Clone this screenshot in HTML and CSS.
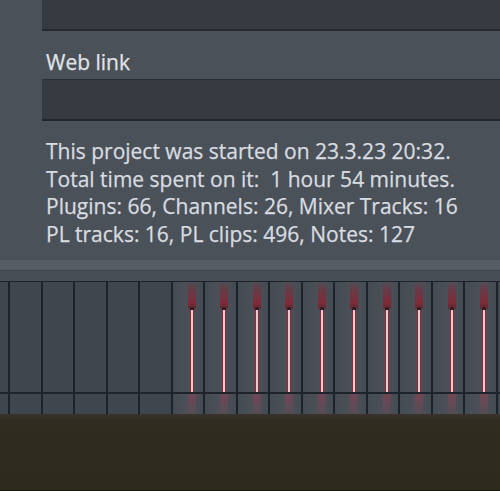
FILE: index.html
```html
<!DOCTYPE html>
<html>
<head>
<meta charset="utf-8">
<link rel="stylesheet" href="styles.css">
</head>
<body>
<div class="panel">
  <div class="field field-top"></div>
  <div class="label">Web link</div>
  <div class="field field-link"></div>
  <div class="info">
    <div>This project was started on 23.3.23 20:32.</div>
    <div>Total time spent on it:&nbsp; 1 hour 54 minutes.</div>
    <div>Plugins: 66, Channels: 26, Mixer Tracks: 16</div>
    <div>PL tracks: 16, PL clips: 496, Notes: 127</div>
  </div>
</div>
<div class="edge"></div>
<div class="band"></div>
<div class="grid">
  <div class="cell cell-first"><div class="upper"></div><div class="lower"></div></div>
  <div class="cell"><div class="upper"></div><div class="lower"></div></div>
  <div class="cell"><div class="upper"></div><div class="lower"></div></div>
  <div class="cell"><div class="upper"></div><div class="lower"></div></div>
  <div class="cell"><div class="upper"></div><div class="lower"></div></div>
  <div class="cell"><div class="upper"></div><div class="lower"></div></div>
  <div class="cell lit"><div class="upper"><div class="note"></div></div><div class="lower"><div class="glow"></div></div></div>
  <div class="cell lit"><div class="upper"><div class="note"></div></div><div class="lower"><div class="glow"></div></div></div>
  <div class="cell lit"><div class="upper"><div class="note"></div></div><div class="lower"><div class="glow"></div></div></div>
  <div class="cell lit"><div class="upper"><div class="note"></div></div><div class="lower"><div class="glow"></div></div></div>
  <div class="cell lit"><div class="upper"><div class="note"></div></div><div class="lower"><div class="glow"></div></div></div>
  <div class="cell lit"><div class="upper"><div class="note"></div></div><div class="lower"><div class="glow"></div></div></div>
  <div class="cell lit"><div class="upper"><div class="note"></div></div><div class="lower"><div class="glow"></div></div></div>
  <div class="cell lit"><div class="upper"><div class="note"></div></div><div class="lower"><div class="glow"></div></div></div>
  <div class="cell lit"><div class="upper"><div class="note"></div></div><div class="lower"><div class="glow"></div></div></div>
  <div class="cell lit"><div class="upper"><div class="note"></div></div><div class="lower"><div class="glow"></div></div></div>
  <div class="cell"><div class="upper"></div><div class="lower"></div></div>
</div>
<div class="floor"></div>
</body>
</html>
```
FILE: styles.css
```css
html, body {
  margin: 0;
  padding: 0;
  background: #ffffff;
  width: 500px;
  height: 500px;
  overflow: hidden;
}
.panel {
  background: #4b5158;
  height: 260px;
  padding-left: 42px;
  box-sizing: border-box;
  font-family: "Open Sans", "Noto Sans", sans-serif;
  color: #d8dce0;
}
.field {
  background: #353b41;
}
.field-top {
  height: 29px;
  border-bottom: 2px solid #262a2f;
}
.label {
  font-size: 21px;
  line-height: 27px;
  padding-left: 4px;
  margin-top: 18px;
  height: 30px;
  color: #e0e4e8;
  -webkit-text-stroke: 0.25px #e0e4e8;
}
.field-link {
  height: 39px;
  border-top: 1px solid #2a2f34;
  border-bottom: 2px solid #23272c;
}
.info {
  margin-top: 17px;
  padding-left: 4px;
  font-size: 21px;
  line-height: 27.7px;
  white-space: nowrap;
  -webkit-text-stroke: 0.25px #d8dce0;
}
.edge {
  height: 10px;
  background: #555c64;
  border-bottom: 1px solid #3f454c;
}
.band {
  height: 10px;
  background: #484e56;
  border-bottom: 1px solid #1f242a;
}
.grid {
  display: grid;
  grid-template-columns: 8px repeat(15, 32.5px) 4.5px;
  width: 500px;
  height: 132px;
  overflow: hidden;
  background: #40464e;
}
.cell {
  display: flex;
  flex-direction: column;
  border-left: 2px solid #1d232a;
  background: #40464e;
  overflow: hidden;
}
.cell-first {
  border-left: none;
}
.cell.lit {
  background: linear-gradient(90deg, #454b53 0%, #4a4f57 40%, #4e4f57 55%, #4a4f57 70%, #454b53 100%);
}
.upper {
  height: 110px;
  border-bottom: 2px solid #1f242a;
  display: flex;
  padding-left: 15px;
}
.lower {
  flex: 1;
  display: flex;
  padding-left: 15px;
}
.note {
  width: 8px;
  height: 110px;
  background: linear-gradient(180deg, rgba(140,30,45,0) 0px, rgba(140,30,45,0.35) 6px, rgba(139,35,50,0.8) 20px, rgba(110,30,40,0.8) 26px, transparent 28px);
  position: relative;
}
.note::before {
  content: "";
  position: absolute;
  left: 2px;
  top: 25px;
  width: 4px;
  height: 4px;
  border-radius: 50%;
  background: #2a1b1f;
}
.note::after {
  content: "";
  position: absolute;
  left: 2px;
  top: 28px;
  bottom: 0;
  width: 2px;
  background: #eac9cf;
  border-left: 1px solid #8f2a38;
  border-right: 1px solid #8f2a38;
}
.glow {
  width: 8px;
  height: 20px;
  background: linear-gradient(180deg, rgba(160,60,80,0.45), rgba(160,60,80,0.1));
}
.floor {
  height: 76px;
  background: linear-gradient(180deg, #38342a 0px, #302c20 6px, #2d2a1e 100%);
  border-bottom: 1px solid #1d1b14;
}
```
